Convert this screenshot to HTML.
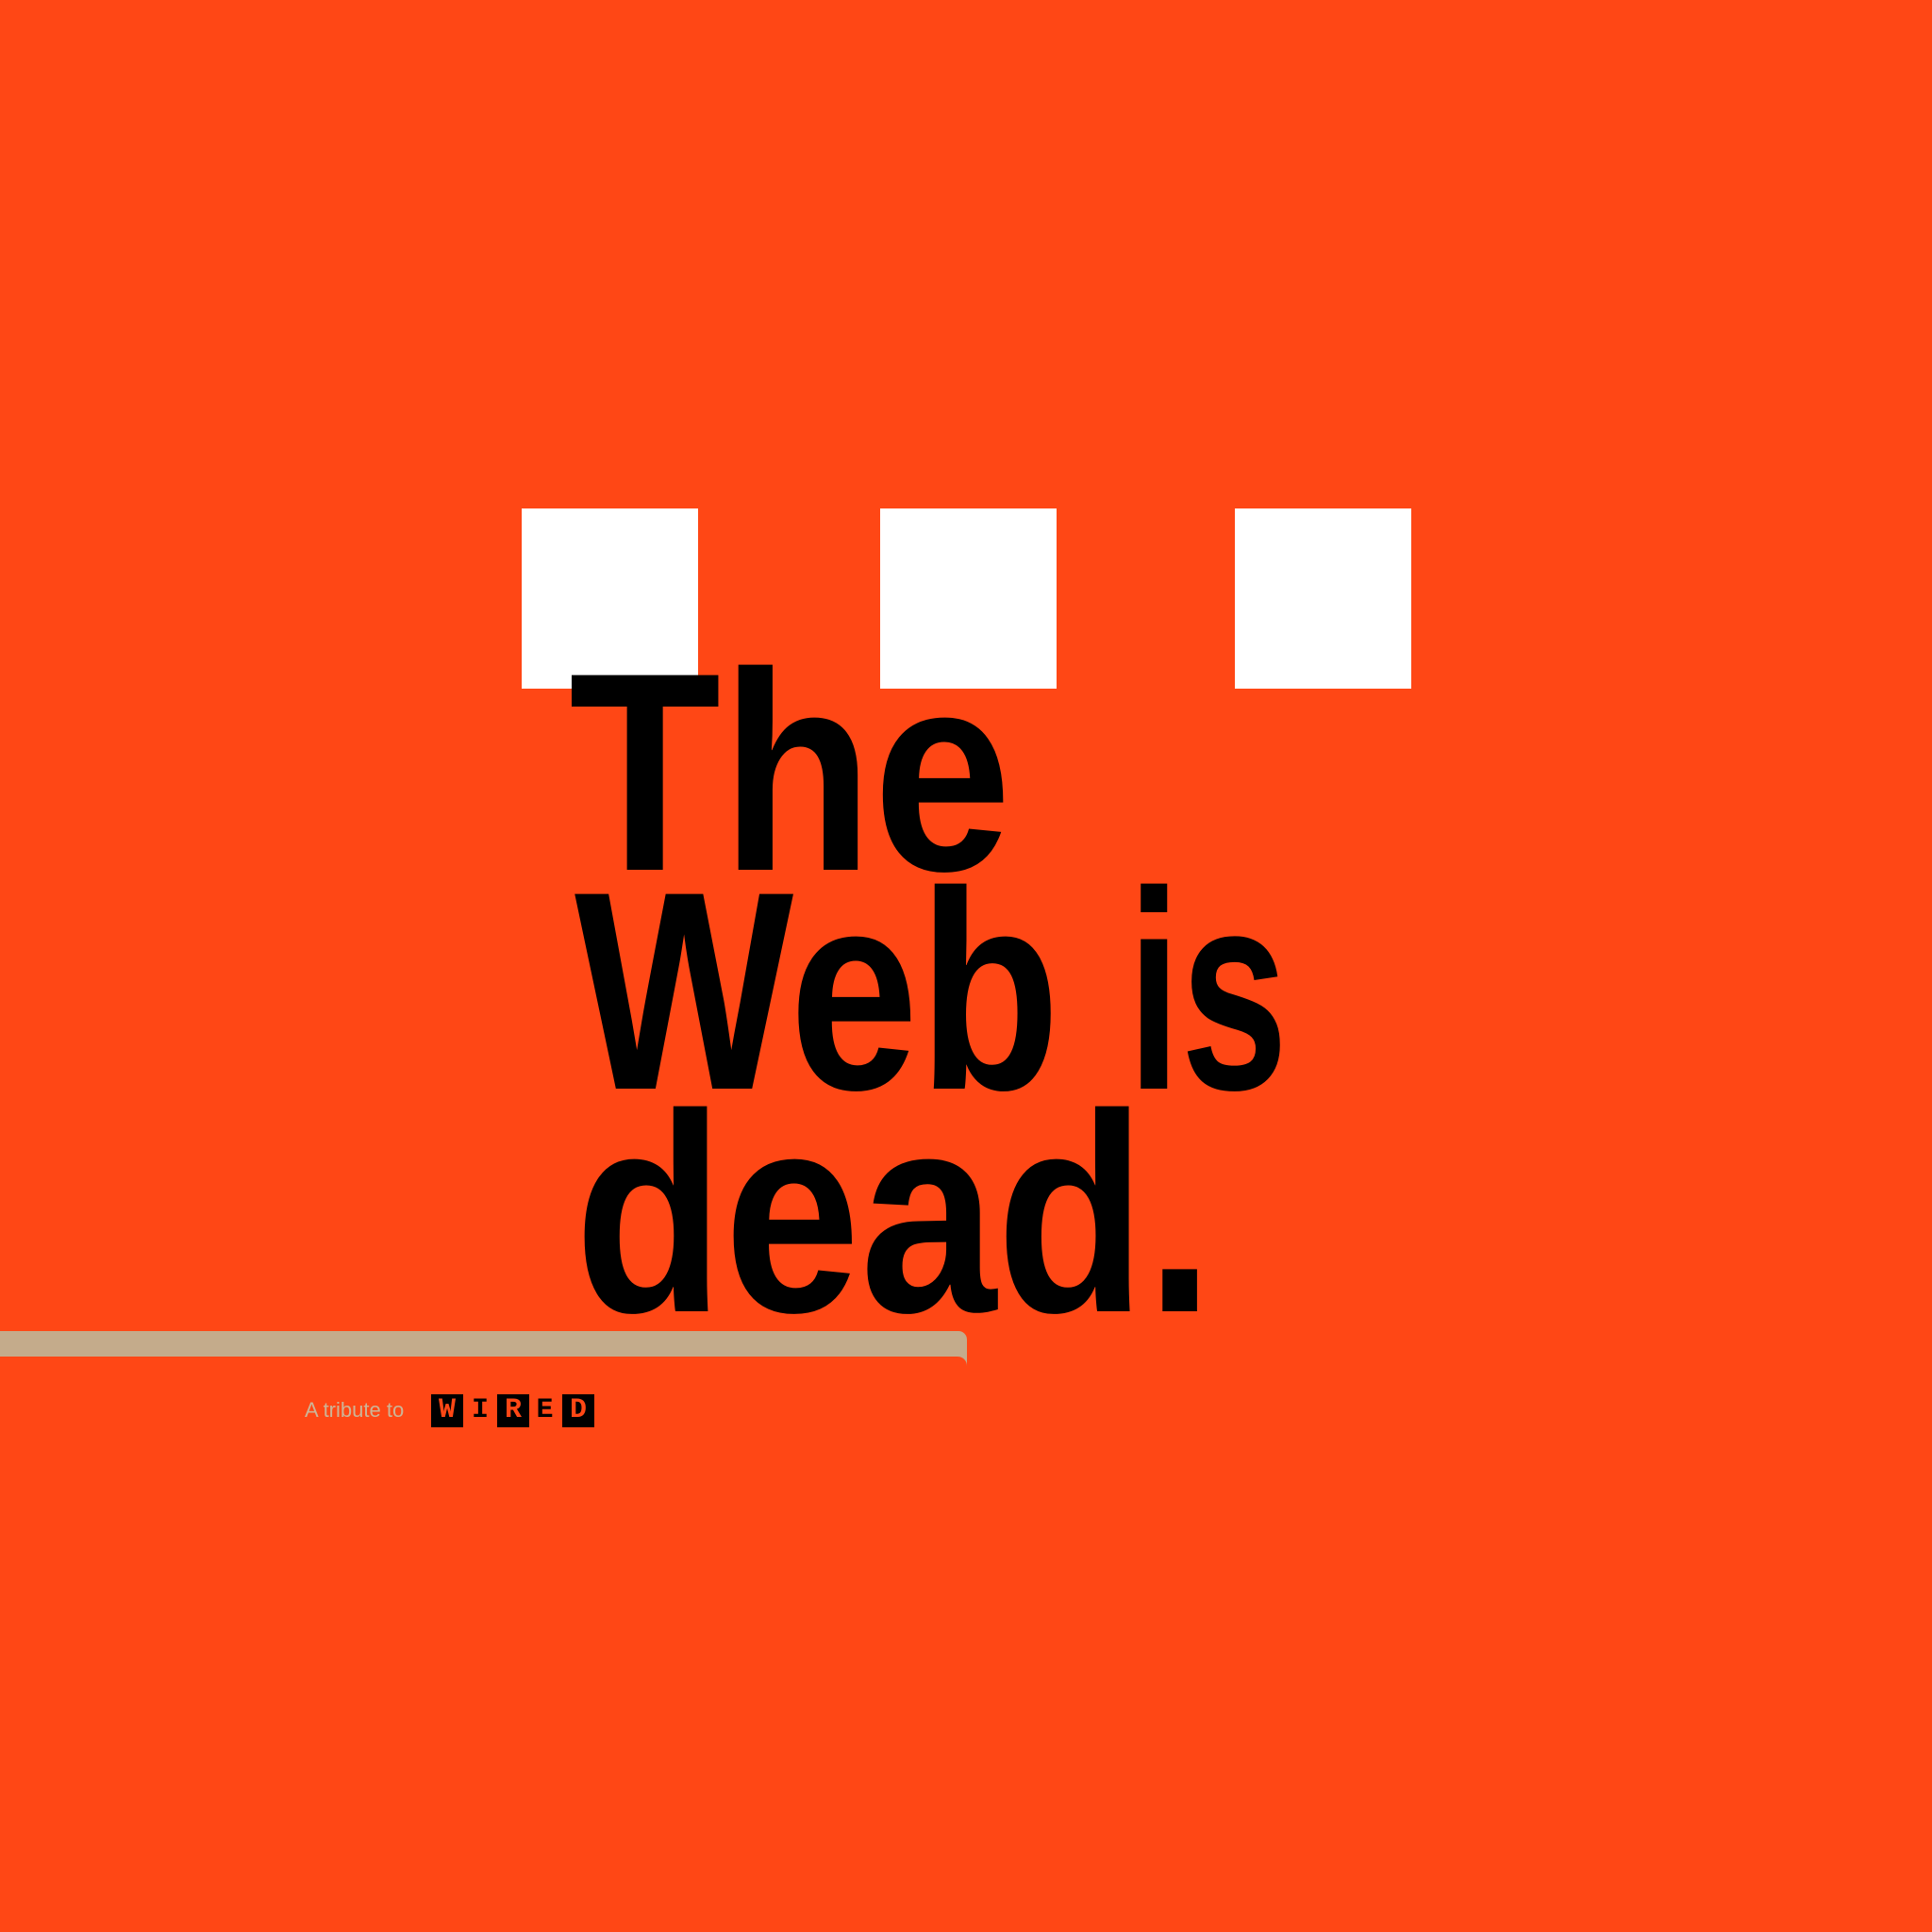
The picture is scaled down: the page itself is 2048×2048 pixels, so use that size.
<!DOCTYPE html>
<html><head><style>
body{margin:0;width:2048px;height:2048px;background:#ff4715;position:relative;overflow:hidden;font-family:"Liberation Sans",sans-serif}
.sq{position:absolute;background:#fff;top:539px;width:187px;height:191px}
.t{position:absolute;font-weight:bold;font-size:300px;line-height:300px;color:#000;transform-origin:0 0;white-space:nowrap}
.bar{position:absolute;left:0;top:1411px;width:1025px;height:27px;background:#c4ab8b;border-top-right-radius:9px}
.tail{position:absolute;left:1015px;top:1438px;width:10px;height:10px;background:#c4ab8b}
.tail:after{content:"";position:absolute;left:0;top:0;width:10px;height:10px;background:#ff4715;border-top-right-radius:10px}
.trib{position:absolute;left:323px;top:1482px;font-size:22px;color:#cdb496}
.w{position:absolute;top:1478px;height:35px;font:bold 30px/35px "Liberation Mono",monospace;text-align:center}
.b{background:#000;color:#ff4715}
.n{color:#000}
</style></head><body>
<div class="sq" style="left:553px"></div>
<div class="sq" style="left:933px"></div>
<div class="sq" style="left:1309px"></div>
<div class="t" style="left:603px;top:668px;transform:scaleX(.88)">The</div>
<div class="t" style="left:609px;top:900px;transform:scaleX(.82)">Web</div>
<div class="t" style="left:1195px;top:900px;transform:scaleX(.68)">is</div>
<div class="t" style="left:609px;top:1136px;transform:scaleX(.865)">dead.</div>
<div class="bar"></div><div class="tail"></div>
<div class="trib">A tribute to</div>
<div class="w b" style="left:457px;width:34px">W</div>
<div class="w n" style="left:500px;width:18px">I</div>
<div class="w b" style="left:527px;width:34px">R</div>
<div class="w n" style="left:567px;width:21px">E</div>
<div class="w b" style="left:596px;width:34px">D</div>
</body></html>
